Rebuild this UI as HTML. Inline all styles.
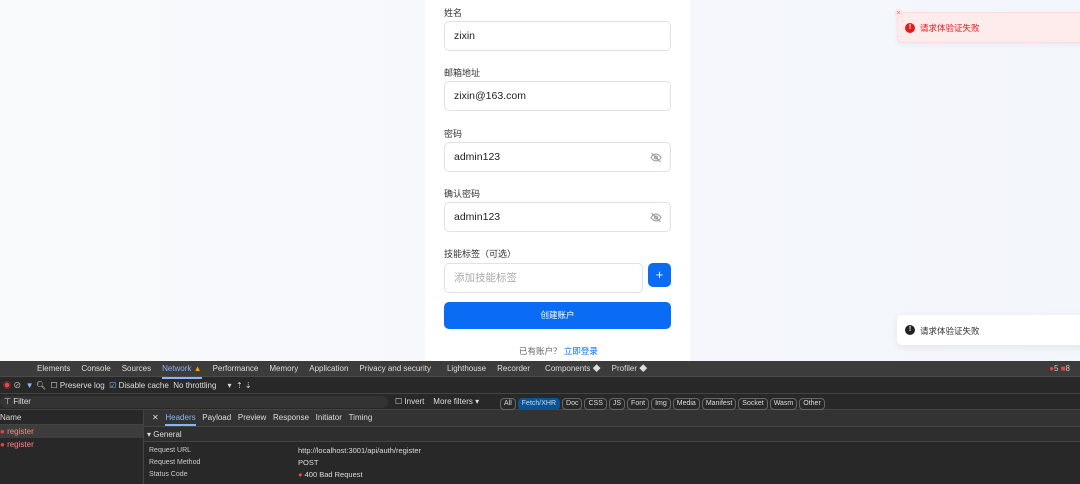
<!DOCTYPE html><html><head><meta charset="utf-8"><style>
*{box-sizing:border-box;margin:0;padding:0}
body{width:1080px;height:484px;overflow:hidden;position:relative;background:linear-gradient(90deg,#f9fafc,#f3f6fb);font-family:"Liberation Sans","Noto Sans CJK SC",sans-serif}
.a{position:absolute}
.card{left:425px;top:0;width:265px;height:361px;background:#fff}
.lbl{font-size:9px;color:#333;left:444px}
.inp{left:444px;width:227px;height:30px;border:1px solid #dfe2e8;border-radius:5px;font-size:10.5px;color:#222;padding:0 9px;line-height:29px}
.eye{right:8px;top:9px}
.dt{left:0;top:361px;width:1080px;height:123px;background:#282828;color:#ddd;font-size:8px}
.row{left:0;width:1080px}
.tab{display:inline-block;margin-right:11px}
.pill{display:inline-block;border:1px solid #666;border-radius:4px;padding:0 3px;margin-right:2px;line-height:10px}
</style></head><body>
<div class="a card"></div>
<div class="a lbl" style="top:6px">姓名</div>
<div class="a inp" style="top:21px">zixin</div>
<div class="a lbl" style="top:66px">邮箱地址</div>
<div class="a inp" style="top:81px">zixin@163.com</div>
<div class="a lbl" style="top:127px">密码</div>
<div class="a inp" style="top:142px">admin123<svg class="a eye" width="12" height="11" viewBox="0 0 24 22" fill="none" stroke="#999" stroke-width="2"><path d="M2 11s4-7 10-7 10 7 10 7-4 7-10 7S2 11 2 11z"/><circle cx="12" cy="11" r="3"/><path d="M3 2l18 18"/></svg></div>
<div class="a lbl" style="top:187px">确认密码</div>
<div class="a inp" style="top:202px">admin123<svg class="a eye" width="12" height="11" viewBox="0 0 24 22" fill="none" stroke="#999" stroke-width="2"><path d="M2 11s4-7 10-7 10 7 10 7-4 7-10 7S2 11 2 11z"/><circle cx="12" cy="11" r="3"/><path d="M3 2l18 18"/></svg></div>
<div class="a lbl" style="top:247px">技能标签（可选）</div>
<div class="a inp" style="top:263px;width:199px;color:#aaa">添加技能标签</div>
<div class="a" style="left:648px;top:263px;width:23px;height:24px;background:#0a6cf5;border-radius:5px;color:#fff;text-align:center;line-height:23px;font-size:13px">+</div>
<div class="a" style="left:444px;top:302px;width:227px;height:27px;background:#0a6cf5;border-radius:5px;color:#fff;text-align:center;line-height:27px;font-size:8.5px">创建账户</div>
<div class="a" style="left:519px;top:345px;font-size:8.5px;color:#666">已有账户？ <span style="color:#0a6cf5">立即登录</span></div>
<div class="a" style="left:897px;top:12px;width:190px;height:31px;background:#feecec;border:1px solid #fcdcdc;border-radius:5px;box-shadow:0 2px 6px rgba(0,0,0,.05)"></div>
<div class="a" style="left:894px;top:9px;width:9px;height:9px;border-radius:50%;background:#fde5e5;color:#e66;font-size:7px;text-align:center;line-height:9px">×</div>
<div class="a" style="left:905px;top:23px;width:10px;height:10px;border-radius:50%;background:#e31b1b;color:#fff;font-size:7px;font-weight:bold;text-align:center;line-height:10px">!</div>
<div class="a" style="left:920px;top:22px;font-size:8.5px;color:#e31b1b">请求体验证失败</div>
<div class="a" style="left:897px;top:315px;width:190px;height:30px;background:#fff;border-radius:5px;box-shadow:0 2px 8px rgba(0,0,0,.08)"></div>
<div class="a" style="left:905px;top:325px;width:10px;height:10px;border-radius:50%;background:#222;color:#fff;font-size:7px;font-weight:bold;text-align:center;line-height:10px">!</div>
<div class="a" style="left:920px;top:325px;font-size:8.5px;color:#333">请求体验证失败</div>
<div class="a dt">
 <div class="a row" style="top:0;height:16px;background:#3c3c3c;border-bottom:1px solid #4a4a4a;line-height:16px;padding-left:37px"><span class="tab">Elements</span><span class="tab">Console</span><span class="tab">Sources</span><span class="tab" style="color:#8ab4f8;border-bottom:2px solid #8ab4f8">Network <span style="color:#f90">▲</span></span><span class="tab">Performance</span><span class="tab">Memory</span><span class="tab">Application</span><span class="tab" style="margin-right:16px">Privacy and security</span><span class="tab">Lighthouse</span><span class="tab" style="margin-right:15px">Recorder</span><span class="tab">Components ◆</span><span class="tab">Profiler ◆</span><span class="a" style="right:10px;top:0;color:#ccc"><span style="color:#e44">●</span>5 <span style="color:#e44">■</span>8</span></div>
 <div class="a row" style="top:16px;height:17px;line-height:17px;padding-left:3px;border-bottom:1px solid #444"><span style="color:#e44">◉</span> ⊘ &nbsp;<span style="color:#8ab4f8">▼</span> 🔍︎ &nbsp;☐ Preserve log &nbsp;<span style="color:#8ab4f8">☑</span> Disable cache &nbsp;No throttling &nbsp;&nbsp;&nbsp;&nbsp;▾ &nbsp;⇡ ⇣</div>
 <div class="a row" style="top:33px;height:16px;line-height:16px;border-bottom:1px solid #444"><div class="a" style="left:0;top:2px;width:388px;height:12px;background:#333;border-radius:6px;padding-left:4px;line-height:12px">⊤ Filter</div><div class="a" style="left:395px">☐ Invert &nbsp;&nbsp;&nbsp;More filters ▾</div><div class="a" style="left:500px;top:2px;font-size:7px"><span class="pill">All</span><span class="pill" style="background:#0b5393;border-color:#0b5393;color:#cde">Fetch/XHR</span><span class="pill">Doc</span><span class="pill">CSS</span><span class="pill">JS</span><span class="pill">Font</span><span class="pill">Img</span><span class="pill">Media</span><span class="pill">Manifest</span><span class="pill">Socket</span><span class="pill">Wasm</span><span class="pill">Other</span></div></div>
 <div class="a" style="left:143px;top:49px;width:1px;height:74px;background:#444"></div>
 <div class="a" style="left:0;top:49px;width:143px;height:15px;line-height:15px;border-bottom:1px solid #444">Name</div>
 <div class="a" style="left:0;top:64px;width:143px;height:13px;background:#3d3d3d;line-height:13px;color:#f28b82"><span style="color:#e44">●</span> register</div>
 <div class="a" style="left:0;top:77px;line-height:13px;color:#f28b82"><span style="color:#e44">●</span> register</div>
 <div class="a" style="left:144px;top:49px;width:936px;height:17px;background:#333;border-bottom:1px solid #444;line-height:16px;padding-left:8px">✕ &nbsp;&nbsp;<span style="color:#8ab4f8;border-bottom:2px solid #8ab4f8;padding-bottom:2px">Headers</span> &nbsp;&nbsp;Payload &nbsp;&nbsp;Preview &nbsp;&nbsp;Response &nbsp;&nbsp;Initiator &nbsp;&nbsp;Timing</div>
 <div class="a" style="left:144px;top:66px;width:936px;height:15px;background:#2e2e2e;border-bottom:1px solid #444;line-height:15px;padding-left:3px">▾ General</div>
 <div class="a" style="left:149px;top:84px;font-size:7px;line-height:12px;color:#ccc">Request URL<br>Request Method<br>Status Code</div>
 <div class="a" style="left:298px;top:84px;font-size:7.5px;line-height:12px;color:#ddd">http://localhost:3001/api/auth/register<br>POST<br><span style="color:#e44">●</span> 400 Bad Request</div>
</div>
</body></html>
